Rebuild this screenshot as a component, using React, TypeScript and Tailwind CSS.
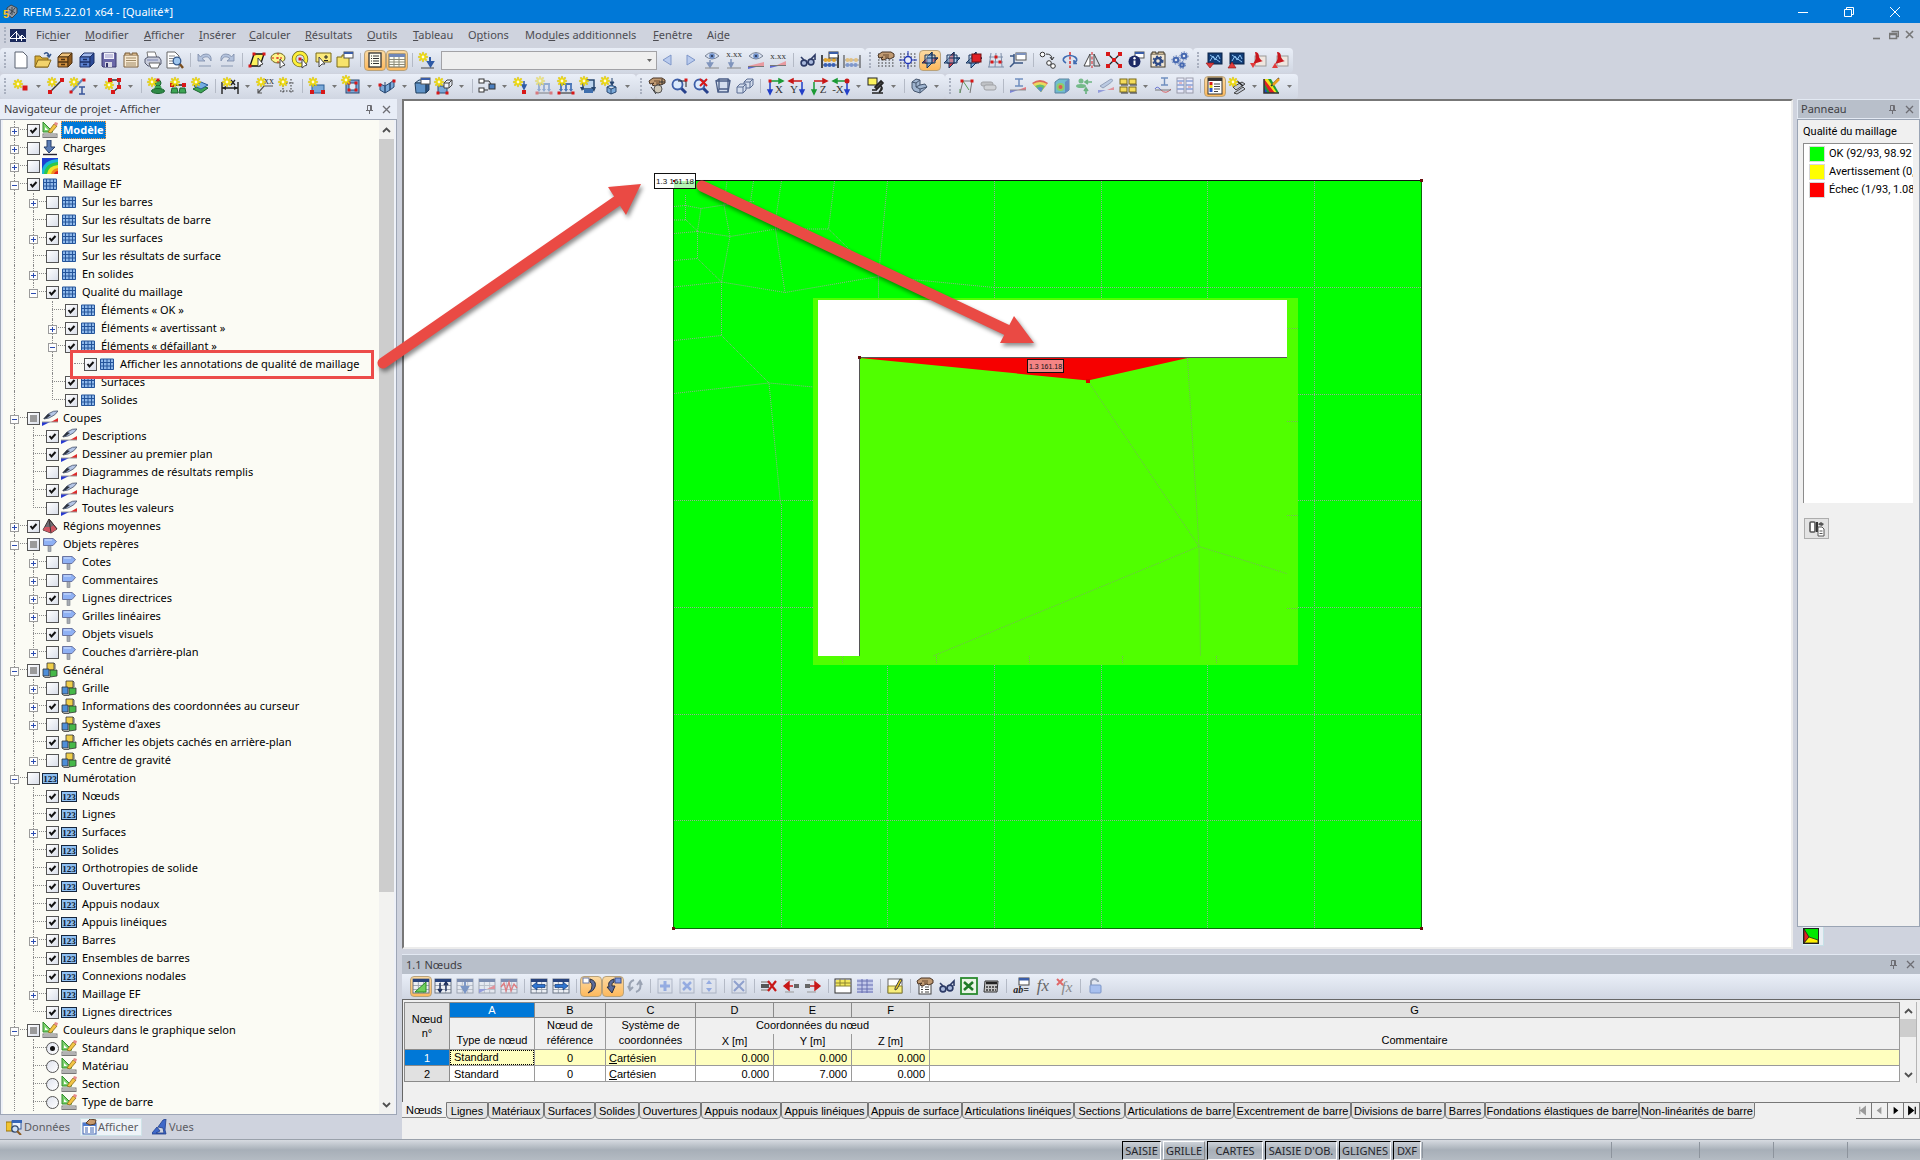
import { useEffect, useRef, type ReactNode } from "react";

/* ---------- small drawing parts shared by the icons ---------- */

const Star = ({ x = 5, y = 5 }: { x?: number; y?: number }) => (
  <g transform={`translate(${x} ${y})`} stroke="#f0dc00" strokeWidth="1.5" strokeLinecap="round">
    <path d="M0-4V4M-4 0H4M-3-3 3 3M3-3-3 3" stroke="#b89a10" strokeWidth="2.4" opacity=".45" />
    <path d="M0-4V4M-4 0H4M-3-3 3 3M3-3-3 3" />
    <circle r="1.4" fill="#fffbe0" stroke="none" />
  </g>
);

const Dot = ({ x, y, s = 4 }: { x: number; y: number; s?: number }) => (
  <rect x={x - s / 2} y={y - s / 2} width={s} height={s} fill="#d81818" />
);

const Grid = ({ x = 1, y = 2, w = 16, h = 14, c = "#6c7686" }: { x?: number; y?: number; w?: number; h?: number; c?: string }) => (
  <g>
    <rect x={x} y={y} width={w} height={h} fill="#eceff4" stroke={c} />
    <rect x={x} y={y} width={w} height="3" fill="#27427c" />
    <path
      d={`M${x} ${y + 6.5}h${w}M${x} ${y + 10.5}h${w}M${x + w / 3} ${y + 3}v${h - 3}M${x + (2 * w) / 3} ${y + 3}v${h - 3}`}
      stroke={c}
      opacity=".6"
    />
  </g>
);

const Eye = ({ x = 9, y = 5 }: { x?: number; y?: number }) => (
  <g transform={`translate(${x} ${y})`}>
    <path d="M-7 0Q0-7 7 0Q0 6-7 0Z" fill="#d7e0f0" stroke="#7a8496" />
    <circle r="2.8" fill="#6d8ec8" />
    <circle r="1.1" fill="#26334f" />
  </g>
);

const Glasses = () => (
  <g fill="#a9b9dc" stroke="#2c3a66" strokeWidth="1.6">
    <circle cx="5" cy="12" r="2.9" />
    <circle cx="12" cy="11" r="2.9" />
    <path d="M5 9 2 6M12 8 16 4V9M8 11.500h1" fill="none" />
  </g>
);

const Cube = ({ c = "#5f93c8" }: { c?: string }) => (
  <g stroke="#23405f">
    <path d="M2 6 6 3H16L13 6Z" fill="#bcd8f2" />
    <path d="M2 6H13V16H3Z" fill={c} />
    <path d="M13 6 16 3V13L13 16Z" fill="#2d5688" />
  </g>
);

const Page = ({ x = 3, y = 1 }: { x?: number; y?: number }) => (
  <path d={`M${x} ${y}h8l4 4v12h-12Z`} fill="#fff" stroke="#5b6270" />
);

const Hand = () => (
  <g>
    <path d="M1 4 5 1H14L17 3V6L13 8 10 7 7 9 4 8 6 6 2 7Z" fill="#c09a72" stroke="#4a3524" />
    <path d="M6 4H12M8 6H12" stroke="#6b4a2e" />
  </g>
);

const DotGrid = () => (
  <path d="M1 3H17M1 6H17M1 9H17M1 12H17M1 15H17" stroke="#333" strokeDasharray="1.500 2" />
);

const Abacus = ({ off = 0, c = "#3960b5" }: { off?: number; c?: string }) => (
  <g>
    <path d={`M1 ${4 + off}V17M17 ${4 + off}V17`} stroke="#222" strokeWidth="1.6" />
    <path d="M1 9H17M1 14H17" stroke="#555" />
    <g fill={c}>
      <circle cx="4.500" cy="14" r="2" />
      <circle cx="8.500" cy="14" r="2" />
      <circle cx="12.500" cy="14" r="2" />
    </g>
    <g fill="#e3a52c">
      <circle cx="4.500" cy="9" r="2" />
      <circle cx="8" cy="9" r="2" />
      <circle cx="13" cy="9" r="2" />
    </g>
  </g>
);

const Plane = ({ red }: { red: "flat" | "upright" | "none" }) => (
  <g stroke="#16335c">
    <path d="M1 12 6 7H17L12 12Z" fill={red === "flat" ? "#d8262a" : "#9cc3e8"} />
    <path d="M6 6 11 1V12L6 17Z" fill={red === "upright" ? "#d8262a" : "#6aa3dc"} fillOpacity=".85" />
    <path d="M4 4H14V12H4Z" fill="#b9d6f2" fillOpacity=".45" />
    <path d="M11 1V12M6 7H17" />
  </g>
);

const Lens = () => (
  <g>
    <path d="M11 11 16 16" stroke="#27418c" strokeWidth="3" />
    <circle cx="7.500" cy="7.500" r="5" fill="#dbeafc" stroke="#3c5ea8" strokeWidth="1.800" />
  </g>
);

const Letter = ({ t, x = 11, y = 16, s = 11 }: { t: string; x?: number; y?: number; s?: number }) => (
  <text x={x} y={y} fontSize={s} textAnchor="middle" fill="#333" fontFamily="Liberation Serif, serif">
    {t}
  </text>
);

const Loads = ({ c = "#4a76b8" }: { c?: string }) => (
  <g>
    <path d="M3 7H15M4 7V13M9 7V13M14 7V13" stroke={c} strokeWidth="1.800" fill="none" />
    <path d="M2 12h4l-2 3ZM7 12h4l-2 3ZM12 12h4l-2 3Z" fill={c} />
    <path d="M2 16H16" stroke="#222" />
    <Dot x={2} y={16} s={3} />
    <Dot x={16} y={16} s={3} />
  </g>
);

const Screen = ({ up }: { up?: boolean }) => (
  <g>
    <rect x="3" y="2" width="14" height="11" fill="#123d77" stroke="#0b2347" />
    <path d="M5 10 8 5 10 9 13 4 15 8M5 4 15 11" stroke="#8fc5f5" fill="none" />
    <path d={up ? "M1 17 5 11 9 17Z" : "M1 12H9L5 17Z"} fill="#e23b3b" stroke="#8a1010" strokeWidth=".6" />
  </g>
);

const Pdf = ({ up }: { up?: boolean }) => (
  <g>
    <rect x="6" y="5" width="11" height="10" fill="#efe6df" stroke="#9a9a9a" />
    <path d="M6 1Q10 1 10 6Q12 10 14 10L4 13Q8 8 6 1Z" fill="#c8161d" />
    <path d={up ? "M1 17 4 12 7 17Z" : "M1 12H7L4 17Z"} fill="#e23b3b" />
  </g>
);

const Support = () => (
  <g>
    <circle cx="11" cy="6" r="3" fill="#3da555" stroke="#1c6430" />
    <path d="M8 9H14L15 13H7Z" fill="#3da555" />
    <ellipse cx="11" cy="14" rx="6.500" ry="2.500" fill="#2f8a46" stroke="#1c6430" />
  </g>
);

const ArrowLR = ({ left }: { left?: boolean }) => (
  <path d={left ? "M2 9 7 5V7.500H15V10.500H7V13Z" : "M16 9 11 5V7.500H3V10.500H11V13Z"} fill="#2f74d0" stroke="#123b7a" strokeWidth=".7" />
);

const icons: Record<string, ReactNode> = {
  new: <Page />,
  open: (
    <g>
      <path d="M1 16V5H6L8 7H14V16Z" fill="#d9ae35" stroke="#86671a" />
      <path d="M1 16 4 9H17L14 16Z" fill="#f3d36b" stroke="#86671a" />
      <path d="M10 3Q14 0 15 5M13 4 15 6 17 3" stroke="#37578d" fill="none" strokeWidth="1.500" />
    </g>
  ),
  cabinet: (
    <g stroke="#4f3312">
      <path d="M2 6 6 2H16L12 6Z" fill="#eec27c" />
      <path d="M2 6H12V16H2Z" fill="#cf9040" />
      <path d="M12 6 16 2V12L12 16Z" fill="#8e5a1f" />
      <path d="M2 11H12M5 8.500H9M5 13.500H9" strokeWidth="1.400" />
    </g>
  ),
  cabinetBlue: (
    <g stroke="#1b2f66">
      <path d="M2 6 6 2H16L12 6Z" fill="#a4bbec" />
      <path d="M2 6H12V16H2Z" fill="#5c82d0" />
      <path d="M12 6 16 2V12L12 16Z" fill="#2c4b97" />
      <path d="M2 11H12M5 8.500H9M5 13.500H9" strokeWidth="1.400" />
    </g>
  ),
  save: (
    <g>
      <path d="M2 2H16V16H3L2 15Z" fill="#6a68a8" stroke="#3c3b70" />
      <rect x="4" y="2" width="10" height="6" fill="#f2f2fa" />
      <path d="M5 4H13M5 6H13" stroke="#9a98c8" />
      <rect x="5" y="11" width="7" height="5" fill="#d7d7e4" />
      <rect x="6" y="12" width="2" height="4" fill="#34336a" />
    </g>
  ),
  clipboard: (
    <g>
      <path d="M2 4H16V16H2Z" fill="#f8ead2" stroke="#7a5f3a" />
      <path d="M3 4V2H8V4M10 4V2H15V4" fill="#d4b489" stroke="#7a5f3a" />
      <path d="M4 7H14M4 9.500H14M4 12H14M4 14H14" stroke="#a08a66" />
    </g>
  ),
  print: (
    <g>
      <path d="M4 7 3 1H11L13 7" fill="#fff" stroke="#777" />
      <path d="M1 8 4 6H15L17 9V13L14 15H4L1 12Z" fill="#c8ccdb" stroke="#555b70" />
      <path d="M5 12H16L14 17H7Z" fill="#fff" stroke="#666" />
      <path d="M3 9H14" stroke="#7d86b4" />
    </g>
  ),
  preview: (
    <g>
      <path d="M1 1H9L13 5V17H1Z" fill="#fff" stroke="#666" />
      <path d="M3 5H9M3 7.500H8M3 10H7M3 12.500H8" stroke="#888" />
      <path d="M13 12 17 17" stroke="#7a4d1d" strokeWidth="2.400" />
      <circle cx="11" cy="10" r="3.800" fill="#9fc7ef" stroke="#35598d" strokeWidth="1.300" />
    </g>
  ),
  undo: (
    <g>
      <path d="M2 3V10H9L6 7.500Q12 3 15 10Q16 3 10 3Q6 3 4.500 6Z" fill="#b3c2dc" stroke="#7c8ba8" strokeWidth=".8" />
      <path d="M3 15H15" stroke="#8b99b2" />
    </g>
  ),
  redo: (
    <g>
      <path d="M16 3V10H9L12 7.500Q6 3 3 10Q2 3 8 3Q12 3 13.500 6Z" fill="#b3c2dc" stroke="#7c8ba8" strokeWidth=".8" />
      <path d="M3 15H15" stroke="#8b99b2" />
    </g>
  ),
  selPoly: (
    <g>
      <path d="M6 3H16L12 15H2Z" fill="#fdf35c" stroke="#111" strokeWidth="1.300" />
      <Dot x={6} y={3} s={3} />
      <Dot x={16} y={3} s={3} />
      <Dot x={2} y={15} s={3} />
      <path d="M10 7V16L12.500 14 15 13Z" fill="#fff" stroke="#444" />
    </g>
  ),
  selEllipse: (
    <g>
      <ellipse cx="8" cy="7" rx="7" ry="5" fill="#fdf48a" stroke="#6b6420" />
      <path d="M8 2V12M2 7H14" stroke="#d81818" strokeDasharray="2 2" />
      <path d="M10 8V17L12.500 15 15 14Z" fill="#fff" stroke="#444" />
    </g>
  ),
  selRing: (
    <g>
      <circle cx="8" cy="8" r="6" fill="none" stroke="#6b6420" strokeWidth="4.500" />
      <circle cx="8" cy="8" r="6" fill="none" stroke="#fdf03a" strokeWidth="3" />
      <Dot x={8} y={8} s={3} />
      <path d="M10 8V17L12.500 15 15 14Z" fill="#fff" stroke="#444" />
    </g>
  ),
  selNote: (
    <g>
      <path d="M2 2H17V11H9L7 14V11H2Z" fill="#fbe97a" stroke="#7a6a18" />
      <path d="M12 4V8M10 6H14M10 9.500H14" stroke="#222" />
      <path d="M5 6V16L8 13 11 13Z" fill="#fff" stroke="#444" />
    </g>
  ),
  selFolder: (
    <g>
      <path d="M1 6H6V4H9V6H13V16H1Z" fill="#f7e36b" stroke="#7a6a18" />
      <rect x="8" y="1" width="9" height="6" fill="#fff" stroke="#555" />
      <rect x="8" y="1" width="9" height="2" fill="#3a5da8" />
    </g>
  ),
  list: (
    <g>
      <rect x="3" y="2" width="12" height="14" fill="#fffdf0" stroke="#333" strokeWidth="1.300" />
      <path d="M7 5H13M7 7.500H13M7 10H13M7 12.500H13" stroke="#333" />
      <path d="M5 5H6M5 7.500H6M5 10H6M5 12.500H6" stroke="#333" />
    </g>
  ),
  table: (
    <g>
      <rect x="1" y="3" width="16" height="13" fill="#fffdf0" stroke="#6b6b5c" />
      <rect x="1" y="3" width="16" height="3" fill="#7187b8" />
      <path d="M1 8.500H17M1 11H17M1 13.500H17M6 6V16M11 6V16" stroke="#8c8a78" />
    </g>
  ),
  starLoad: (
    <g>
      <Star x={5} y={6} />
      <path d="M12 6V13M10 11 12.500 15 15 11Z" stroke="#2e5aa6" fill="#2e5aa6" strokeWidth="2" />
      <path d="M3 17H16" stroke="#444" />
    </g>
  ),
  prev: <path d="M12 4V14L4 9Z" fill="#b9cbee" stroke="#7f97c9" />,
  next: <path d="M6 4V14L14 9Z" fill="#b9cbee" stroke="#7f97c9" />,
  eyeLoad: (
    <g>
      <Eye />
      <path d="M7 9V14M4.500 12 7 16 9.500 12Z" fill="#8095bd" stroke="#8095bd" strokeWidth="1.500" />
      <path d="M2 17H16" stroke="#888" />
    </g>
  ),
  xxLoad: (
    <g>
      <Letter t="x.xx" x={9} y={6} s={9} />
      <path d="M6 8V14M4 12 6 16 8 12Z" fill="#8095bd" stroke="#8095bd" strokeWidth="1.500" />
      <path d="M2 17H16" stroke="#888" />
    </g>
  ),
  eyeRed: (
    <g>
      <Eye />
      <path d="M1 15 17 11V15Z" fill="#e89aa0" />
      <path d="M1 16H9L1 18Z" fill="#5c68d0" />
      <path d="M1 15.500H17" stroke="#777" />
    </g>
  ),
  xxRed: (
    <g>
      <Letter t="x.xx" x={9} y={8} s={9} />
      <path d="M8 14 17 10V14Z" fill="#e89aa0" />
      <path d="M1 15H9L1 17Z" fill="#5c68d0" />
      <path d="M1 14.500H17" stroke="#777" />
    </g>
  ),
  glasses: <Glasses />,
  abacusDlg: (
    <g>
      <Abacus />
      <rect x="8" y="1" width="9" height="6" fill="#fff" stroke="#333" />
      <rect x="8" y="1" width="9" height="2" fill="#3a5da8" />
    </g>
  ),
  abacus: (
    <g opacity=".55">
      <Abacus />
    </g>
  ),
  gridHand: (
    <g>
      <DotGrid />
      <Hand />
    </g>
  ),
  gridCross: (
    <g>
      <DotGrid />
      <path d="M9 0V18M0 9H18" stroke="#2036b8" />
      <circle cx="9" cy="9" r="3.500" fill="#e8ecf6" stroke="#2036b8" strokeWidth="1.300" />
    </g>
  ),
  plane1: <Plane red="flat" />,
  plane2: <Plane red="upright" />,
  plane3: (
    <g>
      <Plane red="none" />
      <rect x="7" y="3" width="9" height="8" fill="#e01f24" stroke="#701010" />
    </g>
  ),
  gridPts: (
    <g>
      <path d="M4 2 2 16M9 2 8 16M14 2 15 16M2 6H16M2 11H16M1 16H17" stroke="#7d8ea8" fill="none" />
      <Dot x={9} y={6} s={3} />
      <Dot x={5} y={11} s={3} />
      <Dot x={13} y={11} s={3} />
    </g>
  ),
  dlgPlane: (
    <g>
      <path d="M5 3V12L1 16M5 12H14M5 5H1" stroke="#3a5684" strokeWidth="1.500" fill="none" />
      <rect x="7" y="2" width="10" height="7" fill="#fff" stroke="#555" />
      <rect x="7" y="2" width="10" height="2" fill="#7d92bd" />
    </g>
  ),
  copyMove: (
    <g fill="#fff" stroke="#333">
      <circle cx="3.500" cy="3.500" r="2.300" />
      <circle cx="10" cy="12" r="2.300" />
      <circle cx="14" cy="15" r="2.300" />
      <path d="M7 3Q13 3 13 8M11 6 13 9 15 6" fill="none" />
    </g>
  ),
  rotate: (
    <g>
      <path d="M5 12Q0 9 4 6Q9 3 14 6Q18 9 13 12M13 9V12.500H16" stroke="#3f6cb2" strokeWidth="1.600" fill="none" />
      <path d="M9 1V17" stroke="#d81818" strokeDasharray="3 1.500" strokeWidth="1.300" />
    </g>
  ),
  mirror: (
    <g fill="#fff" stroke="#444">
      <path d="M7 3V15H1Z" />
      <path d="M11 3V15H17Z" fill="#d6dae2" />
      <path d="M9 1V17" stroke="#d81818" strokeDasharray="3 1.500" />
    </g>
  ),
  cross: (
    <g>
      <path d="M2 2 16 16M16 2 2 16" stroke="#222" strokeWidth="1.300" />
      <Dot x={3} y={3} />
      <Dot x={15} y={3} />
      <Dot x={3} y={15} />
      <Dot x={15} y={15} />
      <Dot x={9} y={9} />
    </g>
  ),
  info: (
    <g>
      <rect x="8" y="1" width="9" height="6" fill="#fff" stroke="#555" />
      <rect x="8" y="1" width="9" height="2" fill="#3a5da8" />
      <circle cx="7.500" cy="10.500" r="6" fill="#1d2a66" />
      <path d="M7.500 9.500V14" stroke="#fff" strokeWidth="2" />
      <circle cx="7.500" cy="7.300" r="1.200" fill="#fff" />
    </g>
  ),
  gearBox: (
    <g>
      <rect x="2" y="3" width="14" height="13" fill="#f1e7d5" stroke="#40382a" />
      <path d="M3 3V1H7V3M9 3V1H15V3" fill="#ccb996" stroke="#40382a" />
      <circle cx="9" cy="10" r="3" fill="none" stroke="#2e4a86" strokeWidth="2.400" />
      <circle cx="9" cy="10" r="4.800" fill="none" stroke="#2e4a86" strokeWidth="1.500" strokeDasharray="2 2" />
    </g>
  ),
  gears: (
    <g fill="none" stroke="#4668b0">
      <circle cx="13" cy="5" r="2.300" strokeWidth="2" />
      <circle cx="13" cy="5" r="4" strokeDasharray="1.500 1.500" />
      <circle cx="5" cy="9" r="2.300" strokeWidth="2" />
      <circle cx="5" cy="9" r="4" strokeDasharray="1.500 1.500" />
      <circle cx="11" cy="14" r="1.800" strokeWidth="2" />
      <circle cx="11" cy="14" r="3.300" strokeDasharray="1.500 1.500" />
    </g>
  ),
  screenDown: <Screen />,
  screenUp: <Screen up />,
  pdfDown: <Pdf />,
  pdfUp: <Pdf up />,
  node: (
    <g>
      <Star x={6} y={7} />
      <Dot x={13} y={11} s={5} />
    </g>
  ),
  line: (
    <g>
      <path d="M3 15 15 3" stroke="#333" strokeWidth="1.500" />
      <Star x={5} y={5} />
      <Dot x={3} y={15} />
      <Dot x={15} y={3} />
    </g>
  ),
  member: (
    <g>
      <path d="M2 15 14 2" stroke="#6288bd" strokeWidth="2" />
      <Star x={5} y={5} />
      <Dot x={2} y={15} s={3} />
      <Dot x={15} y={3} s={3} />
      <path d="M10 10H16M10 17H16M13 10V17" stroke="#38559a" strokeWidth="1.500" />
    </g>
  ),
  polyline: (
    <g>
      <path d="M5 9V3H15V10L9 15" stroke="#333" fill="none" strokeWidth="1.300" />
      <Star x={5} y={8} />
      <Dot x={6} y={3} />
      <Dot x={15} y={3} />
      <Dot x={15} y={10} />
      <Dot x={9} y={15} />
    </g>
  ),
  support: (
    <g>
      <Support />
      <Star x={5} y={5} />
      <Dot x={11} y={3} s={3} />
    </g>
  ),
  supportLine: (
    <g>
      <path d="M2 8H16" stroke="#222" strokeWidth="1.500" />
      <Dot x={3} y={8} />
      <Dot x={15} y={8} />
      <Star x={6} y={5} />
      <path d="M3 11H8L9 16H2ZM11 11H16L17 16H10Z" fill="#3da555" stroke="#1c6430" />
    </g>
  ),
  supportSurf: (
    <g>
      <path d="M2 12 9 8 17 11 10 16Z" fill="#3da555" stroke="#1c6430" />
      <path d="M3 9 10 5 17 8 10 12Z" fill="#74aee2" stroke="#2a5c94" />
      <Star x={5} y={5} />
    </g>
  ),
  dim: (
    <g>
      <path d="M1 5V17M17 5V17M1 11H17" stroke="#222" strokeWidth="1.400" fill="none" />
      <path d="M1 11 5 9V13ZM17 11 13 9V13Z" fill="#222" />
      <path d="M10 3 14 8M14 3 10 8" stroke="#222" strokeWidth="1.300" />
      <Star x={6} y={5} />
    </g>
  ),
  comment: (
    <g>
      <Letter t="xx" x={13} y={7} s={10} />
      <path d="M17 9H8L2 16M2 12V16H6" stroke="#555" fill="none" strokeWidth="1.200" />
      <Star x={5} y={5} />
    </g>
  ),
  guides: (
    <g>
      <path d="M5 2V17M13 2V17M2 6H17M2 14H17" stroke="#333" strokeDasharray="1.500 1.500" />
      <Star x={5} y={5} />
    </g>
  ),
  surface: (
    <g>
      <rect x="4" y="8" width="12" height="8" fill="#7ba9d8" stroke="#2a5c94" />
      <Star x={5} y={5} />
      <Dot x={4} y={15} />
      <Dot x={15} y={15} />
    </g>
  ),
  opening: (
    <g>
      <rect x="3" y="3" width="13" height="13" fill="#7ba9d8" stroke="#2a4a74" />
      <rect x="6" y="6" width="7" height="7" fill="#dfe8f4" stroke="#2a4a74" />
      <Dot x={6} y={6} s={3} />
      <Dot x={13} y={6} s={3} />
      <Dot x={6} y={13} s={3} />
      <Dot x={13} y={13} s={3} />
      <Star x={3} y={3} />
    </g>
  ),
  fold: (
    <g>
      <path d="M2 7 7 9V16L2 13ZM7 9 12 6V13L7 16ZM12 6 16 3V10L12 13Z" fill="#7ba9d8" stroke="#2a4a74" />
      <Dot x={2} y={8} s={3} />
      <Dot x={16} y={4} s={3} />
      <path d="M7 5V9" stroke="#2a4a74" />
    </g>
  ),
  solid: (
    <g>
      <Cube />
      <rect x="8" y="1" width="9" height="6" fill="#fff" stroke="#555" />
      <rect x="8" y="1" width="9" height="2" fill="#3a5da8" />
    </g>
  ),
  solidNew: (
    <g>
      <rect x="3" y="9" width="9" height="7" fill="#7ba9d8" stroke="#2a4a74" />
      <path d="M9 6H14V11H9ZM9 6 12 3H17L14 6M17 3V8L14 11" fill="#eef2f8" stroke="#444" />
      <Star x={4} y={5} />
      <Dot x={3} y={16} s={3} />
      <Dot x={12} y={16} s={3} />
    </g>
  ),
  combine: (
    <g fill="#fff" stroke="#333">
      <rect x="1" y="2" width="5" height="4" />
      <rect x="1" y="11" width="5" height="4" />
      <path d="M6 4H11L13 7M6 13H10" fill="none" />
      <rect x="11" y="7" width="6" height="5" fill="#4a7fc0" />
    </g>
  ),
  loadNode: (
    <g>
      <path d="M11 4V10M9 8 11 12 13 8Z" stroke="#2e5aa6" fill="#2e5aa6" strokeWidth="1.500" />
      <Star x={5} y={5} />
      <Dot x={11} y={15} />
    </g>
  ),
  loadLine: (
    <g opacity=".5">
      <Loads />
      <Star x={5} y={4} />
    </g>
  ),
  loadMember: (
    <g>
      <Loads />
      <Star x={5} y={4} />
    </g>
  ),
  loadSurf: (
    <g>
      <path d="M4 3H15V12H4Z" fill="#bcd4ee" stroke="#26456f" strokeWidth="1.500" />
      <path d="M1 10H5L3 14ZM12 10H17L15 15Z" fill="#26456f" />
      <rect x="5" y="12" width="9" height="4" fill="#3f6fae" />
      <Star x={5} y={4} />
    </g>
  ),
  loadSolid: (
    <g>
      <path d="M11 1V7M9 5 11 8 13 5Z" stroke="#26456f" fill="#26456f" />
      <path d="M6 10 10 8 15 10V15L10 17 6 15ZM6 10 10 12 15 10M10 12V17" fill="#7ba9d8" stroke="#2a4a74" />
      <Star x={4} y={4} />
    </g>
  ),
  pan: (
    <g>
      <Hand />
      <circle cx="10" cy="12" r="4" fill="#cfc8b8" stroke="#555" />
      <path d="M14 2V8M11 5H17M3 10 8 17" stroke="#333" />
    </g>
  ),
  zoomWin: (
    <g>
      <Lens />
      <path d="M8 4H16V10" stroke="#222" fill="none" />
      <Dot x={16} y={3} s={3} />
    </g>
  ),
  zoomX: (
    <g>
      <Lens />
      <path d="M8 2 15 9M15 2 8 9" stroke="#d81818" strokeWidth="2" />
    </g>
  ),
  cubeWire: (
    <g fill="none" stroke="#4a5d86" strokeWidth="1.300">
      <path d="M2 4H16L14 15H4Z" fill="#d4deee" />
      <path d="M5 2H14V12H5ZM2 4 5 2M16 4 14 2M4 15 5 12M14 15 14 12" />
    </g>
  ),
  cubes: (
    <g fill="#d4deee" stroke="#5a6c92">
      <path d="M8 5 11 2H17V8L14 11H8ZM8 5H14V11M14 5 17 2" />
      <path d="M1 10 4 7H10V13L7 16H1ZM1 10H7V16M7 10 10 7" />
    </g>
  ),
  axX: (
    <g>
      <path d="M4 4H14M13 2 17 4 13 6Z" stroke="#1b9a35" fill="#1b9a35" strokeWidth="1.500" />
      <path d="M4 5V14M2 13 4 17 6 13Z" stroke="#2340c8" fill="#2340c8" strokeWidth="1.500" />
      <Dot x={4} y={4} s={3} />
      <Letter t="X" x={13} />
    </g>
  ),
  axY: (
    <g>
      <path d="M14 4H4M5 2 1 4 5 6Z" stroke="#c81818" fill="#c81818" strokeWidth="1.500" />
      <path d="M14 5V14M12 13 14 17 16 13Z" stroke="#2340c8" fill="#2340c8" strokeWidth="1.500" />
      <Letter t="Y" x={6} />
    </g>
  ),
  axZ: (
    <g>
      <path d="M4 4H14M13 2 17 4 13 6Z" stroke="#c81818" fill="#c81818" strokeWidth="1.500" />
      <path d="M4 5V14M2 13 4 17 6 13Z" stroke="#1b9a35" fill="#1b9a35" strokeWidth="1.500" />
      <Letter t="Z" x={13} />
    </g>
  ),
  axMX: (
    <g>
      <path d="M14 4H4M5 2 1 4 5 6Z" stroke="#1b9a35" fill="#1b9a35" strokeWidth="1.500" />
      <path d="M15 5V14M13 13 15 17 17 13Z" stroke="#2340c8" fill="#2340c8" strokeWidth="1.500" />
      <circle cx="15" cy="4" r="2.500" fill="#c81818" />
      <Letter t="-X" x={6} />
    </g>
  ),
  micro: (
    <g>
      <rect x="1" y="1" width="9" height="7" fill="#fdf35c" stroke="#222" />
      <path d="M8 10 14 4 16 6 10 12ZM5 16H16M12 15Q17 12 14 9M5 13H10" fill="#444" stroke="#222" strokeWidth="1.600" />
    </g>
  ),
  shape: (
    <g stroke="#44546c">
      <path d="M2 5 6 2 10 3V8L15 7 17 10 10 16 4 14 2 11Z" fill="#9fb4cf" />
      <path d="M2 5 6 6V10L10 12M6 6 10 3M10 12 17 10M10 12V16M6 10 10 8" fill="none" />
    </g>
  ),
  frame: (
    <g>
      <path d="M3 16 6 4H15L13 16" fill="none" stroke="#777" />
      <path d="M3 16V12M6 4 12 13" stroke="#5c9a5c" />
      <Dot x={5} y={4} s={3} />
      <Dot x={15} y={4} s={3} />
    </g>
  ),
  roll: (
    <g opacity=".6">
      <rect x="2" y="5" width="12" height="4" rx="2" fill="#aaa" stroke="#777" />
      <rect x="5" y="8" width="12" height="5" rx="2" fill="#c8c8c8" stroke="#777" />
    </g>
  ),
  resSection: (
    <g opacity=".75">
      <path d="M6 2H14M6 9H14M10 2V9" stroke="#4a72ae" strokeWidth="1.500" />
      <path d="M9 13 17 10V13Z" fill="#e4555c" />
      <path d="M1 13H9L1 16Z" fill="#5c68d0" />
      <path d="M1 13H17" stroke="#777" />
    </g>
  ),
  resSurf: (
    <g opacity=".8">
      <path d="M1 6Q9 0 17 6L10 15Z" fill="#d94a3a" />
      <path d="M2 7Q9 3 16 7L10 15Z" fill="#f0d83c" />
      <path d="M4 9Q9 6 14 9L10 15Z" fill="#49b84d" />
      <path d="M6 11Q9 9 12 11L10 15Z" fill="#3a78d0" />
    </g>
  ),
  resSolid: (
    <g opacity=".8">
      <path d="M2 5 6 2H16V13L12 16H2Z" fill="#55b4c8" stroke="#3d6a8c" />
      <path d="M12 5 16 2V13L12 16Z" fill="#4878b8" />
      <circle cx="7.500" cy="10" r="4" fill="#7cc84c" />
      <circle cx="7.500" cy="10" r="2" fill="#e03a2c" />
    </g>
  ),
  resSupport: (
    <g opacity=".65">
      <circle cx="6" cy="4" r="2.500" fill="#3da555" />
      <ellipse cx="6" cy="9" rx="5" ry="2" fill="#3da555" />
      <path d="M17 5H11M13 3 10 5 13 7M11 17V12M9 14 11 11 13 14" stroke="#2f9a46" strokeWidth="1.600" fill="none" />
    </g>
  ),
  resBlade: (
    <g opacity=".55">
      <path d="M3 9 14 2Q18 3 12 7L6 11Z" fill="#9db4d8" stroke="#56698c" />
      <path d="M10 13 17 10V13Z" fill="#e4555c" />
      <path d="M1 13H9L1 16Z" fill="#5c68d0" />
    </g>
  ),
  windows: (
    <g fill="#f4dc5c" stroke="#7a6a18">
      <rect x="1" y="2" width="7" height="5" />
      <rect x="10" y="2" width="7" height="5" />
      <rect x="1" y="10" width="7" height="5" />
      <rect x="10" y="10" width="7" height="5" />
      <path d="M2 8H9M11 8H18M2 16H9M11 16H18" stroke="#333" />
    </g>
  ),
  curve: (
    <g opacity=".75">
      <path d="M7 1H14M7 8H14M10.500 1V8" stroke="#4a72ae" strokeWidth="1.400" />
      <path d="M1 12Q3 8 7 13" stroke="#3a48c8" fill="none" />
      <path d="M7 13Q12 18 17 12" stroke="#d83a3a" fill="none" />
      <path d="M1 13H17" stroke="#555" />
    </g>
  ),
  cols: (
    <g opacity=".65">
      <rect x="1" y="1" width="7" height="15" fill="#eef" stroke="#778" />
      <rect x="10" y="1" width="7" height="15" fill="#eef" stroke="#778" />
      <path d="M1 4H8M1 8H8M1 12H8M10 4H17M10 8H17M10 12H17" stroke="#5c7cc8" strokeWidth="1.500" />
      <path d="M3 6H6M12 10H15" stroke="#d85050" />
    </g>
  ),
  panel: (
    <g>
      <rect x="2" y="1" width="14" height="16" fill="#fff" stroke="#333" />
      <rect x="2" y="1" width="14" height="3" fill="#333" />
      <path d="M5 5V8" stroke="#d81818" strokeWidth="3" />
      <path d="M5 8V11" stroke="#e8d820" strokeWidth="3" />
      <path d="M5 11V15" stroke="#2a56c8" strokeWidth="3" />
      <path d="M8 7H14M8 9.500H14M8 12H14M8 14.500H12" stroke="#444" />
    </g>
  ),
  lights: (
    <g>
      <path d="M5 10 14 5 17 7 8 13ZM6 16 15 10 17 12 9 17Z" fill="#c4cad6" stroke="#444" />
      <path d="M9 4 15 9" stroke="#222" strokeWidth="1.500" />
      <Star x={5} y={5} />
    </g>
  ),
  colors: (
    <g>
      <path d="M1 2H8L16 16H1Z" fill="#1c9a34" />
      <path d="M1 2H5L14 16H9Z" fill="#f2e21c" />
      <path d="M1 2V6L7 16H12Z" fill="#e01f24" />
      <path d="M1 10V16H5Z" fill="#2048c8" />
      <path d="M16 1 8 9M1 2V16H16" stroke="#333" strokeWidth="1.500" fill="none" />
      <path d="M16 2 10 8" stroke="#e8a020" strokeWidth="2.500" />
    </g>
  ),
  tModel: (
    <g>
      <Grid />
      <path d="M3 15H14V5Z" fill="#6fd05c" stroke="#2a8a24" />
    </g>
  ),
  tSort: (
    <g>
      <Grid />
      <path d="M6 6V14M4 12 6 15 8 12M12 14V6M10 8 12 5 14 8" stroke="#1d2f5c" strokeWidth="1.400" fill="none" />
    </g>
  ),
  tLoad: (
    <g opacity=".55">
      <Grid />
      <path d="M9 5V12M6 10 9 15 12 10Z" stroke="#2e5aa6" fill="#2e5aa6" strokeWidth="2" />
    </g>
  ),
  tResult: (
    <g opacity=".55">
      <Grid />
      <path d="M9 12 17 8V12Z" fill="#e4555c" />
      <path d="M1 12H9L1 16Z" fill="#5c68d0" />
    </g>
  ),
  tWave: (
    <g opacity=".55">
      <Grid />
      <path d="M1 10 4 6 6 14 9 5 11 14 14 7 17 11" stroke="#e02828" fill="none" strokeWidth="1.300" />
    </g>
  ),
  tPrev: (
    <g>
      <Grid />
      <ArrowLR left />
    </g>
  ),
  tNext: (
    <g>
      <Grid />
      <ArrowLR />
    </g>
  ),
  tHookA: (
    <g>
      <rect x="1" y="1" width="6" height="5" fill="#fff" stroke="#6b7aa8" />
      <path d="M8 2Q15 4 13 10Q12 14 6 16Q11 12 10 8Q10 6 8 5Z" fill="#5c6c9c" stroke="#2c3040" />
    </g>
  ),
  tHookB: (
    <g>
      <rect x="11" y="1" width="6" height="5" fill="#7d9be0" stroke="#3b4c88" />
      <path d="M10 2Q3 4 5 10L3 10 8 16 11 9H8Q7 6 10 5Z" fill="#5c6c9c" stroke="#2c3040" />
    </g>
  ),
  tSync: (
    <path d="M8 3Q2 5 4 12M2 9 4 13 7 10M10 15Q16 13 14 6M11 8 14 4 16 8" stroke="#9aa3b3" strokeWidth="2" fill="none" />
  ),
  tPlus: (
    <g opacity=".55">
      <rect x="2" y="2" width="14" height="14" fill="#dde2ec" stroke="#8791a5" />
      <path d="M9 4V14M4 9H14" stroke="#5a7fd8" strokeWidth="3" />
    </g>
  ),
  tMove: (
    <g opacity=".55">
      <rect x="2" y="2" width="14" height="14" fill="#dde2ec" stroke="#8791a5" />
      <path d="M5 5 13 13M13 5 5 13" stroke="#5a7fd8" strokeWidth="2.500" />
    </g>
  ),
  tUpDown: (
    <g opacity=".55">
      <rect x="2" y="2" width="14" height="14" fill="#dde2ec" stroke="#8791a5" />
      <path d="M9 3 12 7H6ZM9 15 12 11H6Z" fill="#5a7fd8" />
    </g>
  ),
  tDel: (
    <g opacity=".6">
      <rect x="2" y="2" width="14" height="14" fill="#dde2ec" stroke="#8791a5" />
      <path d="M4 4 14 14M14 4 4 14" stroke="#5a74b8" strokeWidth="2" />
    </g>
  ),
  tRowX: (
    <g>
      <path d="M1 5H8M1 13H8" stroke="#aaa" strokeWidth="2" />
      <path d="M1 9H9" stroke="#555" strokeWidth="4" />
      <path d="M8 4 16 14M16 4 8 14" stroke="#c81818" strokeWidth="2.200" />
    </g>
  ),
  tRowL: (
    <g>
      <path d="M12 9H17" stroke="#666" strokeWidth="4" />
      <path d="M2 9 7 5V13ZM6 9H11" fill="#c81818" stroke="#c81818" strokeWidth="1.400" />
      <path d="M3 15H12M3 3H12" stroke="#999" />
    </g>
  ),
  tRowR: (
    <g>
      <path d="M1 9H6" stroke="#666" strokeWidth="4" />
      <path d="M16 9 11 5V13ZM6 9H12" fill="#c81818" stroke="#c81818" strokeWidth="1.400" />
      <path d="M3 15H12M3 3H12" stroke="#999" />
    </g>
  ),
  tYellow: (
    <g>
      <rect x="1" y="2" width="16" height="14" fill="#fff" stroke="#333" />
      <rect x="2" y="3" width="14" height="6" fill="#f2e75c" />
      <path d="M1 6H17M1 9H17M6 2V9M11 2V9" stroke="#8c8430" />
    </g>
  ),
  tBlue: (
    <g>
      <rect x="1" y="2" width="16" height="14" fill="#c3c9ea" />
      <path d="M1 4H17M1 8H17M1 12H17M1 15H17M6 2V16M11 2V16" stroke="#666fb0" />
    </g>
  ),
  tNote: (
    <g>
      <rect x="2" y="2" width="14" height="14" fill="#fff" stroke="#666" />
      <path d="M2 9H16V16H2Z" fill="#f8ee7c" stroke="#8c8430" />
      <path d="M14 2 9 11V13L11 12 16 3Z" fill="#e8c820" stroke="#444" />
    </g>
  ),
  tProps: (
    <g>
      <rect x="3" y="6" width="12" height="11" fill="#fff" stroke="#444" />
      <path d="M5 10H7M9 10H13M5 12.500H7M9 12.500H13M5 15H7M9 15H13" stroke="#444" />
      <Hand />
    </g>
  ),
  excel: (
    <g>
      <rect x="1" y="1" width="16" height="16" fill="#eaf5e6" stroke="#2a8a2e" strokeWidth="1.800" />
      <path d="M4 5 13 13M13 5 4 13" stroke="#1f7a26" strokeWidth="2.600" />
    </g>
  ),
  calc: (
    <g>
      <path d="M3 4H16L15 15H2Z" fill="#c8c8c8" stroke="#333" />
      <path d="M4 6H15" stroke="#222" strokeWidth="2.500" />
      <path d="M4 10H15M4 13H14" stroke="#333" strokeWidth="1.600" strokeDasharray="2 1" />
    </g>
  ),
  abEq: (
    <g>
      <rect x="7" y="1" width="10" height="7" fill="#fff" stroke="#444" />
      <rect x="7" y="1" width="10" height="2.500" fill="#3a5da8" />
      <text x="9" y="16" fontSize="10" fontWeight="bold" fontStyle="italic" textAnchor="middle" fill="#222" fontFamily="Liberation Serif, serif">
        ab=
      </text>
    </g>
  ),
  fx: (
    <text x="9" y="14" fontSize="17" fontStyle="italic" textAnchor="middle" fill="#666" fontFamily="Liberation Serif, serif">
      fx
    </text>
  ),
  fxX: (
    <g>
      <text x="11" y="15" fontSize="15" fontStyle="italic" textAnchor="middle" fill="#888" fontFamily="Liberation Serif, serif">
        fx
      </text>
      <path d="M1 2 7 8M7 2 1 8" stroke="#e06868" strokeWidth="2" />
    </g>
  ),
  lock: (
    <g>
      <path d="M5 8V4Q8 0 12 4V5" stroke="#9aa3b3" strokeWidth="2" fill="none" />
      <rect x="4" y="8" width="11" height="8" rx="1" fill="#a8c0ee" stroke="#7d96c8" />
    </g>
  ),
};

const Icon = ({ name }: { name: string }) => (
  <svg viewBox="0 0 18 18" className="size-[18px] shrink-0 overflow-visible">
    {icons[name]}
  </svg>
);

const Tool = ({ name, active }: { name: string; active?: boolean }) => (
  <button
    type="button"
    aria-label={name}
    className={
      active
        ? "flex h-[21px] w-[22px] shrink-0 items-center justify-center rounded-sm border border-[#b9a27a] bg-linear-to-b from-[#fbd9a0] to-[#fdb95c]"
        : "flex h-[21px] w-[22px] shrink-0 items-center justify-center"
    }
  >
    <Icon name={name} />
  </button>
);

const Drop = () => (
  <button type="button" aria-label="menu" className="flex h-5 w-[13px] shrink-0 items-center justify-center">
    <svg viewBox="0 0 5 3" className="h-[3px] w-[5px]">
      <path d="M0 0H5L2.500 3Z" fill="#777" />
    </svg>
  </button>
);

const Sep = () => (
  <span className="flex w-2 shrink-0 justify-center">
    <span className="h-3.5 w-px bg-[#b4bac6]" />
  </span>
);

const Grip = () => (
  <span className="flex w-[10px] shrink-0 justify-center">
    <span className="h-4 border-l-2 border-dotted border-[#a9b0bf]" />
  </span>
);

/* "|" separator, ">" drop-down arrow, "*" prefix for a pressed button */
const Tools = ({ items }: { items: string }) => (
  <>
    {items.split(" ").map((t, i) =>
      t === "|" ? <Sep key={i} /> : t === ">" ? <Drop key={i} /> : t[0] === "*" ? <Tool key={i} name={t.slice(1)} active /> : <Tool key={i} name={t} />
    )}
  </>
);

const Group = ({ children }: { children: ReactNode }) => (
  <div className="flex h-[25px] items-center rounded-sm bg-linear-to-b from-[#eaeff8] to-[#d0d6e2] pr-0.5">{children}</div>
);

/* ---------- header ---------- */

const AppIcon = () => (
  <svg viewBox="0 0 16 16" className="size-4">
    <path d="M5 4 9 1 15 4V9L10 14 5 10Z" fill="#8d98a4" stroke="#39434d" />
    <path d="M7 5 13 9M10 3V11M13 4 8 10" stroke="#39434d" />
    <text x="1" y="14" fontSize="11" fontWeight="bold" fill="#ffc21c" fontFamily="Liberation Sans, sans-serif">
      5
    </text>
  </svg>
);

const TitleBar = () => (
  <header className="flex h-[23px] shrink-0 items-center bg-[#0078d7] pl-[2px] text-white">
    <AppIcon />
    <h1 className="ml-[5px] flex-1 text-[11px] leading-4">RFEM 5.22.01 x64 - [Qualité*]</h1>
    <div className="flex">
      <button type="button" aria-label="Réduire" className="flex h-[21px] w-[46px] items-center justify-center">
        <svg viewBox="0 0 10 10" className="size-[10px]">
          <path d="M0 5.500H10" stroke="#fff" />
        </svg>
      </button>
      <button type="button" aria-label="Restaurer" className="flex h-[21px] w-[46px] items-center justify-center">
        <svg viewBox="0 0 10 10" className="size-[10px]">
          <path d="M.5 2.500H7.500V9.500H.5ZM2.500 2.500V.5H9.500V7.500H7.500" stroke="#fff" fill="none" />
        </svg>
      </button>
      <button type="button" aria-label="Fermer" className="flex h-[21px] w-[46px] items-center justify-center">
        <svg viewBox="0 0 10 10" className="size-[10px]">
          <path d="M0 0 10 10M10 0 0 10" stroke="#fff" />
        </svg>
      </button>
      <span className="w-[2px]" />
    </div>
  </header>
);

const menus: [string, string, string, string][] = [
  ["Fic", "h", "ier", "w-[49px]"],
  ["", "M", "odifier", "w-[59px]"],
  ["", "A", "fficher", "w-[55px]"],
  ["", "I", "nsérer", "w-[50px]"],
  ["", "C", "alculer", "w-[56px]"],
  ["", "R", "ésultats", "w-[62px]"],
  ["", "O", "utils", "w-[46px]"],
  ["", "T", "ableau", "w-[55px]"],
  ["O", "p", "tions", "w-[57px]"],
  ["Mod", "u", "les additionnels", "w-[128px]"],
  ["", "F", "enêtre", "w-[54px]"],
  ["Ai", "d", "e", "w-[40px]"],
];

const MenuBar = () => (
  <nav className="flex h-6 shrink-0 items-center text-[#4c4c52]">
    <Grip />
    <svg viewBox="0 0 16 13" className="mr-[10px] h-[13px] w-4">
      <rect width="16" height="13" fill="#1b2a5c" />
      <path d="M0 9.500H16M6.500 2V12M11.500 6V12M0 9 6 3 11 9M9 9 12 6 15 9" stroke="#fff" fill="none" />
    </svg>
    {menus.map(([a, b, c, w]) => (
      <button type="button" key={b + c} className={`${w} text-left text-[11px] leading-4 whitespace-nowrap`}>
        {a}
        <u>{b}</u>
        {c}
      </button>
    ))}
    <div className="ml-auto flex gap-[6px] pr-[5px]">
      {["M0 8.500H7", "M2.500 1.500H9.500V6.500H7.500M.5 3.500H7.500V8.500H.5ZM.5 4.500H7.500", "M1 1 8 8M8 1 1 8"].map((d, i) => (
        <button type="button" key={d} aria-label={["Réduire", "Restaurer", "Fermer"][i]}>
          <svg viewBox="0 0 10 10" className="size-[10px]">
            <path d={d} stroke="#777" strokeWidth="1.600" fill="none" />
          </svg>
        </button>
      ))}
    </div>
  </nav>
);

const ToolBars = () => (
  <div className="shrink-0">
    <div className="flex h-[26px] items-center">
      <Group>
        <Grip />
        <Tools items="new open cabinet cabinetBlue save clipboard print preview | undo redo | selPoly selEllipse selRing selNote selFolder | *list *table | starLoad" />
        <span className="relative ml-[3px] flex h-[19px] w-[216px] border border-[#a2a2a6] bg-[#efefef]">
          <select aria-label="Cas de charge" className="w-full appearance-none">
            <option></option>
          </select>
          <svg viewBox="0 0 5 3" className="pointer-events-none absolute top-[7px] right-[4px] h-[3px] w-[5px]">
            <path d="M0 0H5L2.500 3Z" fill="#666" />
          </svg>
        </span>
        <Tools items="prev next eyeLoad xxLoad eyeRed xxRed | glasses abacusDlg abacus" />
      </Group>
      <Group>
        <Grip />
        <Tools items="gridHand gridCross *plane1 plane2 plane3 gridPts dlgPlane | copyMove rotate mirror cross info gearBox gears" />
      </Group>
      <Group>
        <Grip />
        <Tools items="screenDown screenUp pdfDown pdfUp" />
      </Group>
    </div>
    <div className="flex h-[26px] items-center">
      <Group>
        <Grip />
        <Tools items="node > line member > polyline > | support supportLine supportSurf | dim > comment guides | surface > opening > fold > solid solidNew > | combine > loadNode loadLine loadMember loadSurf loadSolid >" />
      </Group>
      <Group>
        <Grip />
        <Tools items="pan zoomWin zoomX cubeWire cubes | axX axY axZ axMX > micro > | shape >" />
      </Group>
      <Group>
        <Grip />
        <Tools items="frame roll | resSection resSurf resSolid resSupport resBlade windows > curve cols | *panel lights > colors >" />
      </Group>
    </div>
  </div>
);

const PinClose = () => (
  <span className="flex items-center gap-2 text-[#6e6e74]">
    <button type="button" aria-label="Épingler">
      <svg viewBox="0 0 9 9" className="block size-[9px]">
        <path d="M2.500.5H6.500V5.500M2.500.5V5.500M1 5.500H8M5.500 1V5M4.500 5.500V9" stroke="currentColor" fill="none" />
      </svg>
    </button>
    <button type="button" aria-label="Fermer">
      <svg viewBox="0 0 9 9" className="block size-[9px]">
        <path d="M1 1 8 8M8 1 1 8" stroke="currentColor" strokeWidth="1.300" />
      </svg>
    </button>
  </span>
);

/* ---------- project navigator ---------- */

const treeIcons: Record<string, ReactNode> = {
  pencil: (
    <g>
      <path d="M1 0V10H11Z" fill="#7bd06c" stroke="#2f8c2a" />
      <path d="M3 5V8H6Z" fill="#fff" />
      <path d="M6 10 12 2 15 4 9 11Z" fill="#f3c544" stroke="#8d6a15" strokeWidth=".8" />
      <path d="M12 2 13 0 16 1 15 4Z" fill="#e78a8a" />
      <rect x="1" y="12" width="14" height="3.500" fill="#eee" stroke="#777" />
      <path d="M3 13V15M5 13V15M7 13V15M9 13V15M11 13V15M13 13V15" stroke="#777" />
    </g>
  ),
  load: (
    <g>
      <path d="M5 0H9V7H13L7 13 2 7H5Z" fill="#5a7cb4" stroke="#29406c" />
      <path d="M1 14.500H15" stroke="#223" strokeWidth="1.400" />
    </g>
  ),
  rainbow: (
    <g>
      <rect x="0" y="0" width="16" height="16" fill="#1c3fd0" />
      <path d="M0 16V12Q2 2 16 1V16Z" fill="#19b7d8" />
      <path d="M2 16Q3 5 16 4V16Z" fill="#2ec84a" />
      <path d="M5 16Q6 8 16 7V16Z" fill="#f0e428" />
      <path d="M9 16Q10 11 16 10V16Z" fill="#f08a1c" />
      <path d="M12 16Q13 13 16 13V16Z" fill="#e02020" />
    </g>
  ),
  mesh: (
    <g>
      <rect x="1.500" y="3" width="13" height="11" fill="#8fb9ea" />
      <path d="M1.500 3H14.500V13.500H1.500ZM4.500 3V14M8 3V14M11.500 3V14M1.500 6.500H14.500M1.500 10H14.500" stroke="#24549a" fill="none" />
    </g>
  ),
  blade: (
    <g>
      <path d="M2 9 6 4Q12 0 16 1Q14 5 7 8Z" fill="#b5c6e6" stroke="#4a566c" strokeWidth=".8" />
      <path d="M1 9 6 4 9 5 5 8Z" fill="#2c3340" />
      <path d="M9 12 16 8V12Z" fill="#e02a2a" />
      <path d="M0 12H8L0 16Z" fill="#2638d0" />
      <path d="M0 12H16" stroke="#999" />
    </g>
  ),
  pyramid: (
    <g>
      <path d="M7 1 1 12 9 15 15 11Z" fill="#6f6c72" stroke="#3c3434" />
      <path d="M3 9 1 12 9 15 15 11 12 7 9 9Z" fill="#cf5560" />
      <path d="M7 1 9 15M7 1 15 11" stroke="#3c3434" fill="none" />
    </g>
  ),
  sign: (
    <g>
      <rect x="6" y="9" width="3" height="6.500" fill="#a7acb4" stroke="#7b8088" strokeWidth=".6" />
      <path d="M1.500 2.500H11L14.500 5.500 11 9.500H1.500Z" fill="#8fb1f4" stroke="#6a74a0" />
      <path d="M3 4H10" stroke="#d7e4fd" />
    </g>
  ),
  blocks: (
    <g stroke="#333" strokeWidth=".8">
      <path d="M5 1H12V8H5Z" fill="#f0cf4a" />
      <path d="M1 7H7V14H1Z" fill="#4e8ed8" />
      <path d="M8 8H15V14L8 15Z" fill="#46b848" />
      <path d="M12 1 13 2V7M1 14 3 15.500H8" fill="none" />
    </g>
  ),
  num: (
    <g>
      <rect x=".5" y="3.500" width="15" height="10" fill="#8fc0f2" stroke="#16263c" />
      <text x="8" y="12" fontSize="9" textAnchor="middle" fill="#0c1830" fontWeight="bold" fontFamily="Liberation Serif, serif">
        123
      </text>
    </g>
  ),
};

type Row = {
  level: number;
  label: string;
  icon: string;
  state: "on" | "off" | "mixed" | "radioOn" | "radio";
  box?: "+" | "-";
};

/* level, expander, state, icon, label */
const source = `
0+x pencil Modèle
0+o load Charges
0+o rainbow Résultats
0-x mesh Maillage EF
1+o mesh Sur les barres
1.o mesh Sur les résultats de barre
1+x mesh Sur les surfaces
1.o mesh Sur les résultats de surface
1+o mesh En solides
1-x mesh Qualité du maillage
2.x mesh Éléments « OK »
2+x mesh Éléments « avertissant »
2-x mesh Éléments « défaillant »
3.x mesh Afficher les annotations de qualité de maillage
2.x mesh Surfaces
2.x mesh Solides
0-m blade Coupes
1.x blade Descriptions
1.x blade Dessiner au premier plan
1.o blade Diagrammes de résultats remplis
1.x blade Hachurage
1.o blade Toutes les valeurs
0+x pyramid Régions moyennes
0-m sign Objets repères
1+o sign Cotes
1+o sign Commentaires
1+x sign Lignes directrices
1+o sign Grilles linéaires
1.x sign Objets visuels
1+o sign Couches d'arrière-plan
0-m blocks Général
1+o blocks Grille
1+x blocks Informations des coordonnées au curseur
1+o blocks Système d'axes
1.x blocks Afficher les objets cachés en arrière-plan
1+o blocks Centre de gravité
0-o num Numérotation
1.x num Nœuds
1.x num Lignes
1+x num Surfaces
1.x num Solides
1.x num Orthotropies de solide
1.x num Ouvertures
1.x num Appuis nodaux
1.x num Appuis linéiques
1+x num Barres
1.x num Ensembles de barres
1.x num Connexions nodales
1+o num Maillage EF
1.x num Lignes directrices
0-m pencil Couleurs dans le graphique selon
1.R pencil Standard
1.r pencil Matériau
1.r pencil Section
1.r pencil Type de barre`;

const stateOf: Record<string, Row["state"]> = { x: "on", o: "off", m: "mixed", R: "radioOn", r: "radio" };

const rows: Row[] = source
  .trim()
  .split("\n")
  .map((line) => {
    const [head, icon, ...rest] = line.split(" ");
    return {
      level: Number(head[0]),
      box: head[1] === "." ? undefined : (head[1] as "+" | "-"),
      state: stateOf[head[2]],
      icon,
      label: rest.join(" "),
    };
  });

/* whether the guide line of a level goes on below the given row */
const goesOn = (index: number, level: number) => {
  for (let i = index + 1; i < rows.length; i++) {
    if (rows[i].level === level) return true;
    if (rows[i].level < level) return false;
  }
  return level < 2;
};

const Check = ({ state }: { state: Row["state"] }) => {
  const ref = useRef<HTMLInputElement>(null);
  useEffect(() => {
    if (ref.current) ref.current.indeterminate = state === "mixed";
  }, [state]);
  const radio = state === "radio" || state === "radioOn";
  return (
    <span className="grid size-[13px] shrink-0">
      {radio ? (
        <input
          type="radio"
          name="couleurs"
          defaultChecked={state === "radioOn"}
          className="col-start-1 row-start-1 m-0 size-[13px] appearance-none rounded-full border border-[#555] bg-linear-to-br from-[#dfe3ee] to-white"
        />
      ) : (
        <input
          ref={ref}
          type="checkbox"
          defaultChecked={state === "on"}
          className="col-start-1 row-start-1 m-0 size-[13px] appearance-none border border-[#555] bg-linear-to-br from-white to-[#dadfea]"
        />
      )}
      <svg viewBox="0 0 13 13" className="pointer-events-none col-start-1 row-start-1 size-[13px]">
        {state === "on" && <path d="M3.500 6 5.500 8.500 9.500 4" stroke="#111" strokeWidth="2" fill="none" />}
        {state === "mixed" && <rect x="3" y="3" width="7" height="7" fill="#9a9a9a" />}
        {state === "radioOn" && <circle cx="6.500" cy="6.500" r="2.500" fill="#111" />}
      </svg>
    </span>
  );
};

const TreeRow = ({ row, index }: { row: Row; index: number }) => {
  const framed = row.level === 3;
  return (
    <li className={framed ? "relative z-10 flex h-[18px] items-center" : "relative flex h-[18px] items-center"}>
      {Array.from({ length: row.level }, (_, l) => (
        <span key={l} className="flex h-full w-[19px] shrink-0 justify-center">
          {goesOn(index, l) && <span className="h-full border-l border-dotted border-[#8a8a8a]" />}
        </span>
      ))}
      {framed && <span className="absolute -top-[5px] left-[65px] h-[29px] w-[304px] border-3 border-[#ec4b49] bg-[#fbfbf4]" />}
      <span className="relative grid h-full w-[22px] shrink-0">
        <span className={framed ? "col-start-1 row-start-1 ml-3 h-[9px] border-b border-dotted border-[#8a8a8a]" : "col-start-1 row-start-1 ml-[9px] h-[9px] border-b border-dotted border-[#8a8a8a]"} />
        {!framed && (
          <span
            className={
              goesOn(index, row.level)
                ? "col-start-1 row-start-1 ml-[9px] h-full w-px border-l border-dotted border-[#8a8a8a]"
                : "col-start-1 row-start-1 ml-[9px] h-[9px] w-px border-l border-dotted border-[#8a8a8a]"
            }
          />
        )}
        {row.box && (
          <button
            type="button"
            aria-label={row.box === "+" ? "Développer" : "Réduire"}
            className="col-start-1 row-start-1 mt-[6px] ml-[5px] size-[9px] border border-[#9b9b9b] bg-[#fdfdfd]"
          >
            <svg viewBox="0 0 7 7" className="block size-[7px]">
              <path d={row.box === "+" ? "M1 3.500H6M3.500 1V6" : "M1 3.500H6"} stroke="#2b4bb0" />
            </svg>
          </button>
        )}
      </span>
      <label className="relative flex items-center text-[11px] leading-4 whitespace-nowrap">
        <Check state={row.state} />
        <svg viewBox="0 0 16 16" className="ml-[2px] size-4 shrink-0">
          {treeIcons[row.icon]}
        </svg>
        {index === 0 ? (
          <span className="ml-[3px] border border-dotted border-[#ff9a3c] bg-[#0078d7] px-px font-bold text-white">{row.label}</span>
        ) : (
          <span className="ml-[5px]">{row.label}</span>
        )}
      </label>
    </li>
  );
};

const Chevron = ({ down }: { down?: boolean }) => (
  <svg viewBox="0 0 9 6" className="h-[6px] w-[9px]">
    <path d={down ? "M1 1 4.500 4.500 8 1" : "M1 5 4.500 1.500 8 5"} stroke="#505050" strokeWidth="1.800" fill="none" />
  </svg>
);

const Navigator = () => (
  <aside className="flex w-[397px] shrink-0 flex-col">
    <div className="flex h-5 shrink-0 items-center justify-between bg-[#e8edf7] pr-[6px] pl-[4px] text-[#3e3e44]">
      <h2 className="text-[11px] leading-4">Navigateur de projet - Afficher</h2>
      <PinClose />
    </div>
    <div className="flex min-h-0 flex-1 border border-[#9ea6b6] bg-[#eef1f8] px-[2px]">
      <ul className="min-w-0 flex-1 overflow-hidden bg-[#fbfbf4] pt-px pl-[2px] text-black">
        {rows.map((row, i) => (
          <TreeRow key={i} row={row} index={i} />
        ))}
      </ul>
      <div className="flex w-[15px] shrink-0 flex-col bg-[#f2f2f0]">
        <button type="button" aria-label="Haut" className="flex h-[19px] items-center justify-center">
          <Chevron />
        </button>
        <span className="h-[753px] bg-[#cdcdcd]" />
        <button type="button" aria-label="Bas" className="mt-auto flex h-[19px] items-center justify-center">
          <Chevron down />
        </button>
      </div>
    </div>
    <div className="flex h-[24px] shrink-0 items-center pb-px text-[11px] leading-4 text-[#5b5b62]">
      <button type="button" className="flex w-[80px] items-center gap-[2px] pl-[6px]">
        <svg viewBox="0 0 16 16" className="size-4">
          <path d="M0 3H6L7 5H10V12H0Z" fill="#f2c531" stroke="#9a7510" />
          <rect x="6" y="2" width="9" height="8" fill="#e9f1fb" stroke="#345a9c" />
          <rect x="6" y="1" width="10" height="3" fill="#3566b8" />
          <circle cx="9" cy="10" r="3.200" fill="#cfe2f8" stroke="#344b70" strokeWidth="1.300" />
          <path d="M11 12 15 16" stroke="#8a5a20" strokeWidth="2" />
        </svg>
        Données
      </button>
      <button type="button" className="flex h-[18px] w-[62px] items-center gap-[1px] border border-[#cfe3e8] bg-[#eef3f8]">
        <svg viewBox="0 0 16 16" className="size-4">
          <rect x="2" y="4" width="13" height="11" fill="#fff" stroke="#3a62b0" />
          <rect x="2" y="4" width="13" height="3" fill="#4c7bd0" />
          <path d="M4 9H7M9 9H13M4 11H7M9 11H13M4 13H7M9 13H13" stroke="#3a62b0" />
          <path d="M5 4 9 0 15 1 14 5 9 6Z" fill="#c89a6c" stroke="#5a3e26" />
        </svg>
        Afficher
      </button>
      <button type="button" className="flex items-center gap-px pl-[10px]">
        <svg viewBox="0 0 16 16" className="size-4">
          <path d="M0 14 5 8 8 12 4 14H12L11 9 6 8 11 1 14 0 13 11 14 15H0Z" fill="#3e68c8" stroke="#1f3e8c" strokeWidth=".8" />
        </svg>
        Vues
      </button>
    </div>
  </aside>
);

/* ---------- model view ---------- */

/* grid lines of the regular part of the mesh */
const gridX = [781.5, 887.5, 994.5, 1101.5, 1207.5, 1314.5];
const gridY = [287.5, 394.5, 500.5, 607.5, 714.5, 820.5];

const ModelView = () => (
  <div className="min-w-0 flex-1 overflow-hidden border-t-2 border-r-2 border-b-2 border-l-2 border-t-[#777] border-r-[#ececec] border-b-[#ececec] border-l-[#777] bg-white">
    <svg viewBox="404 101 1387 848" className="h-[848px] w-[1387px]">
      <rect x="673.500" y="180.500" width="748" height="748" fill="#00ff00" />
      <g stroke="#98aa98" strokeDasharray="1 1" fill="none">
        {gridX.map((x, i) => (
          <path key={x} d={`M${x} ${i === 0 ? 504 : i === 1 ? 664 : 181}V928`} />
        ))}
        {gridY.map((y, i) => (
          <path key={y} d={`M${i === 0 ? 994 : i === 1 ? 1298 : 674} ${y}H1421`} />
        ))}
        <path d="M674 287 721.500 282 785 292.500 878.500 276.500 917 280 994 287.500" />
        <path d="M674 393.500 769 383 813.500 387M674 340.500 721.500 335.500 769 383 780.500 504M721.500 282V335" />
        <path d="M674 260.500 697.500 258.500 721.500 282 730 236.500 724 205 727 181M674 233.500 697.500 231.500 730 236.500 776 229H828.500L848 248 878.500 276.500" />
        <path d="M674 220H686L697.500 231V258M674 206.500 685.500 205.500 701 208.500 724 205 754 201.500M701 208.500 697.500 231M685.500 195V220" />
        <path d="M753.500 181 750.500 202M781.500 181 775.500 220V229L785 292.500M834.500 181 828.500 229M887.500 181 878.500 276.500V298" />
      </g>
      <rect x="673.500" y="180.500" width="748" height="748" fill="none" stroke="#0b6a0b" />
      <path d="M673 180.500H1421" stroke="#111" />

      <rect x="813" y="298" width="485" height="367" fill="#50ff00" />
      <path d="M818 300H1287V357H859V656H818Z" fill="#fff" />
      <path d="M859.500 656V357.500H1287" fill="none" stroke="#555" />
      <path d="M860 358H1187.500L1088 380.500Z" fill="#f60000" />
      <g stroke="#78b45c" strokeDasharray="1 1" fill="none">
        <path d="M1088 381 1199 546.500 1286.500 573.500M1199 546.500 1200.500 656M1187.500 358 1199 546.500 933 656" />
        <path d="M842.500 656V664M936.500 656V664M1029.500 656V664M1122.500 656V664M1216.500 656V664" />
        <path d="M1287 328.500H1298M1287 421.500H1298M1287 515.500H1298M1287 608.500H1298" />
      </g>
      <g fill="#6a1010">
        <rect x="672" y="927" width="3" height="3" />
        <rect x="1420" y="927" width="3" height="3" />
        <rect x="1420" y="179" width="3" height="3" />
        <rect x="858" y="356" width="3" height="3" />
        <rect x="1086" y="379" width="4" height="4" fill="#e00000" />
      </g>

      <rect x="654.500" y="173.500" width="41" height="15" fill="#fff" stroke="#111" />
      <path d="M674 181H695V188H674Z" fill="#b6f5b6" />
      <rect x="673" y="180" width="2" height="2" fill="#a01010" />
      <text x="675" y="184" fontSize="8" textAnchor="middle" fill="#111" fontFamily="Liberation Sans, sans-serif">
        1.3 161.18
      </text>
      <rect x="1027.500" y="359.500" width="36" height="13" fill="#f48484" stroke="#111" />
      <text x="1045.500" y="369" fontSize="7" textAnchor="middle" fill="#111" fontFamily="Liberation Sans, sans-serif">
        1.3 161.18
      </text>
    </svg>
  </div>
);

const Arrows = () => (
  <svg viewBox="0 99 1100 300" className="pointer-events-none absolute top-0 left-0 z-20 h-[300px] w-[1100px] drop-shadow-[2px_3px_2px_rgba(0,0,0,0.45)]">
    <g fill="#ea4a44" stroke="#ea4a44">
      <path d="M383 363 620 199M702 186 1009 331" strokeWidth="11" strokeLinecap="round" />
      <path d="M641 184 608 187 626 215ZM1034 343 1014 316 1000 343Z" stroke="none" />
    </g>
  </svg>
);

const legend: [string, string][] = [
  ["OK (92/93, 98.92", "bg-[#00ff00]"],
  ["Avertissement (0,", "bg-[#ffff00]"],
  ["Échec (1/93, 1.08", "bg-[#ff0000]"],
];

const Panel = () => (
  <aside className="flex w-[123px] shrink-0 flex-col">
    <div className="flex h-5 shrink-0 items-center justify-between border border-[#e3e9f3] bg-[#b8bfca] pr-[5px] pl-[3px] text-[#3e3e44]">
      <h2 className="text-[11px] leading-4">Panneau</h2>
      <PinClose />
    </div>
    <div className="min-h-0 flex-1 border border-[#9aa4b4] bg-[#f0f0f0] pt-[4px] pr-[6px] pl-[5px] font-[Roboto,sans-serif] text-[11px] leading-4 text-black">
      <p>Qualité du maillage</p>
      <ul className="mt-[3px] h-[360px] overflow-hidden border-t border-l border-[#8c8c8c] bg-white pt-px">
        {legend.map(([t, c]) => (
          <li key={t} className="flex h-[18px] items-center gap-[4px] pl-[5px] whitespace-nowrap">
            <span className={`${c} size-4 shrink-0 border border-[#d8d8d8]`} />
            {t}
          </li>
        ))}
      </ul>
      <button type="button" aria-label="Options du panneau" className="mt-[15px] ml-px flex h-[21px] w-[25px] items-center justify-center border border-[#adadad] bg-[#e3e3e3]">
        <svg viewBox="0 0 16 16" className="size-4">
          <rect x="1" y="1" width="5" height="10" rx="1" fill="#fff" stroke="#555" strokeWidth="1.600" />
          <path d="M8 1V11" stroke="#333" strokeWidth="2" />
          <path d="M9 3 12 1 15 3 13 5 10 4Z" fill="#555" />
          <path d="M9 6H13L15 8V15H9Z" fill="#fff" stroke="#555" />
          <path d="M10.500 10H13.500M10.500 12.500H13.500" stroke="#555" />
        </svg>
      </button>
    </div>
    <div className="h-[22px] shrink-0 pl-[5px]">
      <button type="button" aria-label="Échelle de couleurs" className="flex h-[19px] w-[22px] items-center justify-start border border-t-0 border-[#c5e0e6] bg-[#e9eef4]">
        <svg viewBox="0 0 16 16" className="size-4">
          <rect x=".5" y=".5" width="15" height="15" fill="#00e800" stroke="#222" />
          <path d="M1 1 6 9 1 15Z" fill="#e01f24" stroke="#222" strokeWidth=".8" />
          <path d="M6 9 15 12V15H1Z" fill="#fff000" stroke="#222" strokeWidth=".8" />
        </svg>
      </button>
    </div>
  </aside>
);

/* ---------- table of nodes ---------- */

const sheetTabs: [string, string][] = [
  ["Lignes", "w-[42px]"],
  ["Matériaux", "w-[56px]"],
  ["Surfaces", "w-[51px]"],
  ["Solides", "w-[44px]"],
  ["Ouvertures", "w-[62px]"],
  ["Appuis nodaux", "w-[80px]"],
  ["Appuis linéiques", "w-[87px]"],
  ["Appuis de surface", "w-[94px]"],
  ["Articulations linéiques", "w-[112px]"],
  ["Sections", "w-[51px]"],
  ["Articulations de barre", "w-[109px]"],
  ["Excentrement de barre", "w-[117px]"],
  ["Divisions de barre", "w-[94px]"],
  ["Barres", "w-[40px]"],
  ["Fondations élastiques de barre", "w-[154px]"],
  ["Non-linéarités de barre", "w-[116px]"],
];

const letter = "h-[15px] border border-[#8a8a8a] bg-[#e1e1e1] p-0 font-normal";
const head = "border-r border-b border-[#9a9a9a] p-0 font-normal";
const td = "h-4 border border-[#9a9a9a] p-0";

const Nodes = () => (
  <section className="mt-[5px] flex shrink-0 flex-col">
    <div className="flex h-5 items-center justify-between border-t border-[#e3e9f3] bg-[#b8bfca] pr-[5px] pl-[4px] text-[#3e3e44]">
      <h2 className="text-[11px] leading-4">1.1 Nœuds</h2>
      <PinClose />
    </div>
    <div className="flex h-[25px] items-center bg-linear-to-b from-[#eaeff8] to-[#d0d6e2] pb-px pl-2">
      <Tools items="*tModel tSort tLoad tResult tWave | tPrev tNext | *tHookA *tHookB tSync | tPlus tMove tUpDown | tDel | tRowX tRowL tRowR | tYellow tBlue | tNote | tProps glasses excel calc | abEq fx fxX | lock" />
    </div>
    <div className="flex h-[103px] border-t border-l border-[#666] bg-[#f0f0f0] pt-[2px] pl-px font-[Liberation_Sans,Arial,sans-serif] text-[11px] leading-[14px] text-black">
      <div className="min-w-0 flex-1">
        <table className="w-full table-fixed border-collapse">
          <colgroup>
            <col className="w-[45px]" />
            <col className="w-[85px]" />
            <col className="w-[71px]" />
            <col className="w-[90px]" />
            <col className="w-[78px]" />
            <col className="w-[78px]" />
            <col className="w-[78px]" />
            <col />
          </colgroup>
          <thead>
            <tr>
              <th rowSpan={3} className="border border-[#8a8a8a] bg-[#e1e1e1] p-0 font-normal">
                Nœud
                <br />
                n°
              </th>
              <th className="h-[15px] border border-[#8a8a8a] bg-[#0078d7] p-0 font-normal text-white">A</th>
              {["B", "C", "D", "E", "F", "G"].map((l) => (
                <th key={l} className={letter}>
                  {l}
                </th>
              ))}
            </tr>
            <tr className="h-4">
              <th rowSpan={2} className={`${head} pb-[2px] align-bottom`}>
                Type de nœud
              </th>
              <th rowSpan={2} className={`${head} align-top leading-[15px]`}>
                Nœud de
                <br />
                référence
              </th>
              <th rowSpan={2} className={`${head} align-top leading-[15px]`}>
                Système de
                <br />
                coordonnées
              </th>
              <th colSpan={3} className="border-r border-[#9a9a9a] p-0 align-top font-normal leading-[15px]">
                Coordonnées du nœud
              </th>
              <th rowSpan={2} className={`${head} pb-[2px] align-bottom`}>
                Commentaire
              </th>
            </tr>
            <tr className="h-4">
              {["X [m]", "Y [m]", "Z [m]"].map((l) => (
                <th key={l} className={`${head} align-top`}>
                  {l}
                </th>
              ))}
            </tr>
          </thead>
          <tbody>
            {[
              ["1", "0.000", "0.000", "0.000"],
              ["2", "0.000", "7.000", "0.000"],
            ].map(([n, x, y, z]) => (
              <tr key={n} className={n === "1" ? "bg-[#ffffbf]" : "bg-white"}>
                <th className={n === "1" ? "h-4 border border-[#8a8a8a] bg-[#0078d7] p-0 font-normal text-white" : "h-4 border border-[#8a8a8a] bg-[#e1e1e1] p-0 font-normal"}>{n}</th>
                <td className={td}>
                  <span className={n === "1" ? "block border border-dotted border-black pl-[3px] leading-[13px]" : "block pl-1"}>Standard</span>
                </td>
                <td className={`${td} text-center`}>0</td>
                <td className={td}>
                  <span className="pl-[3px]">
                    <u>C</u>artésien
                  </span>
                </td>
                {[x, y, z].map((v, i) => (
                  <td key={i} className={`${td} text-right`}>
                    <span className="pr-1">{v}</span>
                  </td>
                ))}
                <td className={td}></td>
              </tr>
            ))}
          </tbody>
        </table>
      </div>
      <div className="mr-[3px] mb-[19px] flex w-[17px] shrink-0 flex-col border-r border-[#b5b5b5]">
        <button type="button" aria-label="Haut" className="flex h-[17px] items-center justify-center">
          <Chevron />
        </button>
        <span className="h-[18px] bg-[#cdcdcd]" />
        <button type="button" aria-label="Bas" className="mt-auto flex h-[17px] items-center justify-center">
          <Chevron down />
        </button>
      </div>
    </div>
    <div className="flex h-[37px] items-start bg-[#f0f0f0] font-[Liberation_Sans,Arial,sans-serif] text-[11px] leading-[14px] text-black">
      <button type="button" className="h-4 w-[44px] border-b border-[#888] text-center">
        Nœuds
      </button>
      {sheetTabs.map(([t, w]) => (
        <button
          type="button"
          key={t}
          className={`${w} flex h-[17px] shrink-0 items-center justify-center rounded-b-[4px] border border-[#777] bg-[#e3e3e3] whitespace-nowrap`}
        >
          {t}
        </button>
      ))}
      <div className="ml-auto flex h-[17px] flex-1 justify-end border-t border-[#777]">
        {["M4 4V12M10 4V12L5 8Z", "M10 4V12L5 8Z", "M6 4V12L11 8Z", "M5 4V12L10 8ZM12 4V12"].map((d, i) => (
          <button type="button" key={d} aria-label={["Premier", "Précédent", "Suivant", "Dernier"][i]} className="h-4 w-4 border-r border-b border-[#777]">
            <svg viewBox="0 0 16 16" className={i < 2 ? "size-[15px] text-[#9a9a9a]" : "size-[15px] text-black"}>
              <path d={d} fill="currentColor" stroke="currentColor" strokeWidth={i === 0 || i === 3 ? 1.2 : 0} />
            </svg>
          </button>
        ))}
      </div>
    </div>
  </section>
);

const StatusBar = () => (
  <footer className="flex h-[21px] shrink-0 items-stretch border-t border-[#9aa1ab] bg-linear-to-b from-[#d7dbe1] via-[#a7afb8] to-[#b4bbc3] text-[11px] leading-4 text-[#26262c]">
    <span className="flex-1" />
    <div className="flex gap-[2px] pt-px whitespace-nowrap">
      {[
        ["SAISIE", "w-[39px]"],
        ["GRILLE", "w-[42px]"],
        ["CARTES", "w-[56px]"],
        ["SAISIE D'OB.", "w-[72px]"],
        ["GLIGNES", "w-[52px]"],
        ["DXF", "w-[28px]"],
      ].map(([t, w]) => (
        <button
          type="button"
          key={t}
          className={
            t === "GRILLE"
              ? `${w} border border-t-white border-r-[#8a8a8a] border-b-[#8a8a8a] border-l-white`
              : `${w} border border-t-black border-r-white border-b-white border-l-black`
          }
        >
          {t}
        </button>
      ))}
    </div>
    <span className="my-[2px] ml-px w-[189px] border-l border-[#8d949d]" />
    <span className="my-[2px] w-[88px] border-l border-[#8d949d]" />
    <span className="my-[2px] w-[74px] border-l border-[#8d949d]" />
    <span className="my-[2px] w-[74px] border-l border-[#8d949d]" />
    <span className="my-[2px] w-[73px] border-l border-[#8d949d]" />
  </footer>
);

export default function App() {
  return (
    <div className="flex h-screen flex-col overflow-hidden bg-[#cfd3de] font-[Noto_Sans,Open_Sans,sans-serif]">
      <TitleBar />
      <MenuBar />
      <ToolBars />
      <main className="relative flex min-h-0 flex-1">
        <Navigator />
        <div className="ml-[5px] flex min-w-0 flex-1 flex-col">
          <div className="flex min-h-0 flex-1 gap-[4px]">
            <ModelView />
            <Panel />
          </div>
          <Nodes />
        </div>
        <Arrows />
      </main>
      <StatusBar />
    </div>
  );
}
